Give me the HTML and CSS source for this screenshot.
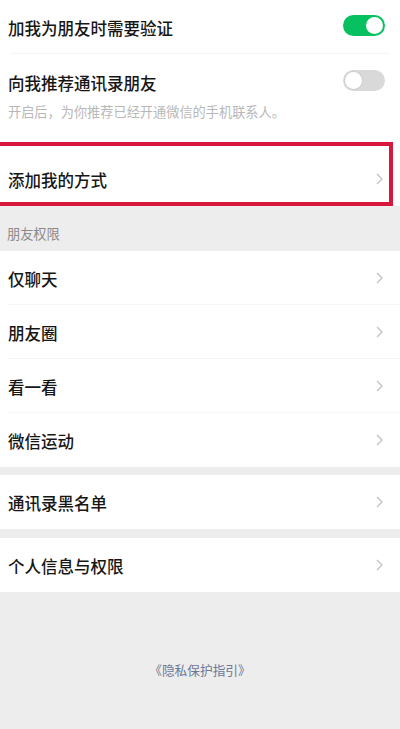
FILE: index.html
```html
<!DOCTYPE html>
<html lang="zh-CN">
<head>
<meta charset="utf-8">
<title>隐私</title>
<link rel="stylesheet" href="styles.css">
</head>
<body>
<div class="page">
  <section class="group">
    <div class="row row-first">
      <span class="label">加我为朋友时需要验证</span>
      <span class="switch on"><span class="knob"></span></span>
    </div>
    <div class="row-wrap">
      <div class="row-main">
        <span class="label">向我推荐通讯录朋友</span>
        <span class="switch off"><span class="knob"></span></span>
      </div>
      <p class="desc">开启后，为你推荐已经开通微信的手机联系人。</p>
    </div>
    <div class="row row-add">
      <span class="label">添加我的方式</span>
      <svg class="chev" viewBox="0 0 7 12" width="7" height="12"><polyline points="1,1 6,6 1,11" fill="none" stroke="#c6c6c6" stroke-width="1.5"/></svg>
    </div>
  </section>

  <div class="section-title">朋友权限</div>

  <section class="group">
    <div class="row sep">
      <span class="label">仅聊天</span>
      <svg class="chev" viewBox="0 0 7 12" width="7" height="12"><polyline points="1,1 6,6 1,11" fill="none" stroke="#c6c6c6" stroke-width="1.5"/></svg>
    </div>
    <div class="row sep">
      <span class="label">朋友圈</span>
      <svg class="chev" viewBox="0 0 7 12" width="7" height="12"><polyline points="1,1 6,6 1,11" fill="none" stroke="#c6c6c6" stroke-width="1.5"/></svg>
    </div>
    <div class="row sep">
      <span class="label">看一看</span>
      <svg class="chev" viewBox="0 0 7 12" width="7" height="12"><polyline points="1,1 6,6 1,11" fill="none" stroke="#c6c6c6" stroke-width="1.5"/></svg>
    </div>
    <div class="row">
      <span class="label">微信运动</span>
      <svg class="chev" viewBox="0 0 7 12" width="7" height="12"><polyline points="1,1 6,6 1,11" fill="none" stroke="#c6c6c6" stroke-width="1.5"/></svg>
    </div>
  </section>

  <section class="group gap1">
    <div class="row">
      <span class="label">通讯录黑名单</span>
      <svg class="chev" viewBox="0 0 7 12" width="7" height="12"><polyline points="1,1 6,6 1,11" fill="none" stroke="#c6c6c6" stroke-width="1.5"/></svg>
    </div>
  </section>

  <section class="group gap2">
    <div class="row">
      <span class="label">个人信息与权限</span>
      <svg class="chev" viewBox="0 0 7 12" width="7" height="12"><polyline points="1,1 6,6 1,11" fill="none" stroke="#c6c6c6" stroke-width="1.5"/></svg>
    </div>
  </section>

  <footer class="footer">
    <span class="link">《隐私保护指引》</span>
  </footer>

  <div class="highlight"></div>
</div>
</body>
</html>
```

FILE: styles.css
```css
* { box-sizing: border-box; }
html, body {
  margin: 0;
  padding: 0;
  background: #ededed;
}
body {
  font-family: "Noto Sans CJK SC", "Noto Sans", sans-serif;
  color: #161616;
  width: 400px;
  height: 729px;
  overflow: hidden;
}
.page {
  position: relative;
  width: 400px;
}
.group {
  background: #fff;
}
.row {
  height: 54px;
  display: flex;
  align-items: center;
  justify-content: space-between;
  padding: 0 17px 0 8px;
  position: relative;
}
.row-first {
  padding-right: 15px;
}
.row-first::after {
  content: "";
  position: absolute;
  left: 10px;
  right: 10px;
  bottom: 0;
  height: 1px;
  background: #f4f4f4;
}
.label {
  font-size: 16.5px;
  line-height: 22px;
  padding-top: 1px;
  font-weight: 500;
}
.row-wrap {
  height: 88px;
  padding: 17px 15px 0 8px;
}
.row-main {
  display: flex;
  align-items: center;
  justify-content: space-between;
  height: 22px;
}
.desc {
  margin: 10px 0 0;
  font-size: 13.2px;
  line-height: 18px;
  color: #b8b8b8;
}
.row-add {
  height: 64px;
  padding-top: 10px;
}
.chev {
  display: block;
}
.switch {
  position: relative;
  width: 42px;
  height: 21px;
  border-radius: 11px;
  margin-top: -4px;
}
.switch.on {
  background: #07c160;
}
.switch.off {
  background: #d9d9d9;
}
.knob {
  position: absolute;
  top: 2px;
  width: 17px;
  height: 17px;
  border-radius: 50%;
  background: #fff;
}
.switch.on .knob {
  right: 2px;
}
.switch.off .knob {
  left: 2px;
  box-shadow: 0 0 0 1px #cfcfcf;
}
.section-title {
  height: 45px;
  padding: 20px 0 0 7px;
  font-size: 13.2px;
  line-height: 16px;
  color: #8a8a8a;
}
.sep::after {
  content: "";
  position: absolute;
  left: 8px;
  right: 0;
  bottom: 0;
  height: 1px;
  background: #f5f5f5;
}
.gap1 { margin-top: 8px; }
.gap2 { margin-top: 9px; }
.footer {
  height: 137px;
  padding-top: 64px;
  text-align: center;
}
.link {
  font-size: 12.7px;
  line-height: 18px;
  color: #6c7897;
}
.highlight {
  position: absolute;
  top: 142px;
  left: -8px;
  width: 401px;
  height: 64px;
  border: 4.5px solid #d8173c;
  pointer-events: none;
}
```
